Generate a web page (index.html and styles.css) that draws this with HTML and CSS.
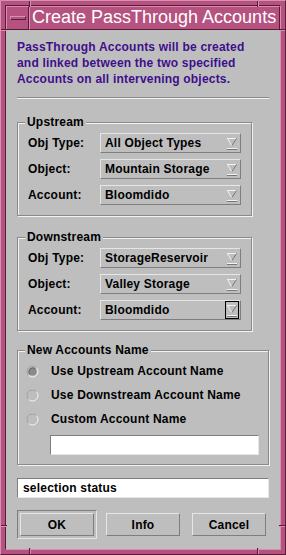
FILE: index.html
```html
<!DOCTYPE html>
<html>
<head>
<meta charset="utf-8">
<link rel="stylesheet" href="styles.css">
</head>
<body>
<div class="window">
  <span class="tick tv" style="left:28px;top:0"></span>
  <span class="tick tv" style="left:256px;top:0"></span>
  <span class="tick tv" style="left:28px;bottom:0"></span>
  <span class="tick tv" style="left:256px;bottom:0"></span>
  <span class="tick th" style="top:28px;left:0"></span>
  <span class="tick th" style="top:28px;right:0"></span>
  <span class="tick th" style="top:524px;left:0"></span>
  <span class="tick th" style="top:524px;right:0"></span>
  <div class="inner">
    <div class="titlebar">
      <div class="menu-btn"><span class="menu-bar"></span></div>
      <div class="title">Create PassThrough Accounts</div>
    </div>
    <div class="client">
      <p class="desc">PassThrough Accounts will be created<br>and linked between the two specified<br>Accounts on all intervening objects.</p>
      <div class="sep"></div>

      <fieldset class="group group-narrow group-up">
        <legend>Upstream</legend>
        <div class="row"><span class="lbl">Obj Type:</span><div class="combo"><span class="val">All Object Types</span><span class="arrow"><svg width="10" height="13" viewBox="0 0 10 13"><path d="M0.5 0.5 L4.5 7.5" stroke="#f2f2f2" fill="none"/><path d="M0 0.5 H9" stroke="#f2f2f2"/><path d="M9.5 0.5 L5 7.5" stroke="#777" fill="none"/><rect x="0" y="10" width="10" height="1" fill="#f2f2f2"/><rect x="0" y="11" width="10" height="1" fill="#777"/></svg></span></div></div>
        <div class="row"><span class="lbl">Object:</span><div class="combo"><span class="val">Mountain Storage</span><span class="arrow"><svg width="10" height="13" viewBox="0 0 10 13"><path d="M0.5 0.5 L4.5 7.5" stroke="#f2f2f2" fill="none"/><path d="M0 0.5 H9" stroke="#f2f2f2"/><path d="M9.5 0.5 L5 7.5" stroke="#777" fill="none"/><rect x="0" y="10" width="10" height="1" fill="#f2f2f2"/><rect x="0" y="11" width="10" height="1" fill="#777"/></svg></span></div></div>
        <div class="row"><span class="lbl">Account:</span><div class="combo"><span class="val">Bloomdido</span><span class="arrow"><svg width="10" height="13" viewBox="0 0 10 13"><path d="M0.5 0.5 L4.5 7.5" stroke="#f2f2f2" fill="none"/><path d="M0 0.5 H9" stroke="#f2f2f2"/><path d="M9.5 0.5 L5 7.5" stroke="#777" fill="none"/><rect x="0" y="10" width="10" height="1" fill="#f2f2f2"/><rect x="0" y="11" width="10" height="1" fill="#777"/></svg></span></div></div>
      </fieldset>

      <fieldset class="group group-narrow group-down">
        <legend>Downstream</legend>
        <div class="row"><span class="lbl">Obj Type:</span><div class="combo"><span class="val">StorageReservoir</span><span class="arrow"><svg width="10" height="13" viewBox="0 0 10 13"><path d="M0.5 0.5 L4.5 7.5" stroke="#f2f2f2" fill="none"/><path d="M0 0.5 H9" stroke="#f2f2f2"/><path d="M9.5 0.5 L5 7.5" stroke="#777" fill="none"/><rect x="0" y="10" width="10" height="1" fill="#f2f2f2"/><rect x="0" y="11" width="10" height="1" fill="#777"/></svg></span></div></div>
        <div class="row"><span class="lbl">Object:</span><div class="combo"><span class="val">Valley Storage</span><span class="arrow"><svg width="10" height="13" viewBox="0 0 10 13"><path d="M0.5 0.5 L4.5 7.5" stroke="#f2f2f2" fill="none"/><path d="M0 0.5 H9" stroke="#f2f2f2"/><path d="M9.5 0.5 L5 7.5" stroke="#777" fill="none"/><rect x="0" y="10" width="10" height="1" fill="#f2f2f2"/><rect x="0" y="11" width="10" height="1" fill="#777"/></svg></span></div></div>
        <div class="row"><span class="lbl">Account:</span><div class="combo"><span class="val">Bloomdido</span><span class="arrow focus"><svg width="10" height="13" viewBox="0 0 10 13"><path d="M0.5 0.5 L4.5 7.5" stroke="#f2f2f2" fill="none"/><path d="M0 0.5 H9" stroke="#f2f2f2"/><path d="M9.5 0.5 L5 7.5" stroke="#777" fill="none"/><rect x="0" y="10" width="10" height="1" fill="#f2f2f2"/><rect x="0" y="11" width="10" height="1" fill="#777"/></svg></span></div></div>
      </fieldset>

      <fieldset class="group group-wide">
        <legend>New Accounts Name</legend>
        <div class="radio-row"><span class="radio"><svg width="13" height="13" viewBox="0 0 13 13"><circle cx="6.5" cy="6.5" r="5.5" fill="none" stroke="#f4f4f4"/><path d="M2.6 10.4 A5.5 5.5 0 0 1 10.4 2.6" fill="none" stroke="#8a8a8a"/><circle cx="6.5" cy="6.5" r="4" fill="#8a8a8a"/><path d="M3.7 9.3 A4 4 0 0 1 9.3 3.7" fill="none" stroke="#666"/></svg></span><span class="rlbl">Use Upstream Account Name</span></div>
        <div class="radio-row"><span class="radio"><svg width="13" height="13" viewBox="0 0 13 13"><circle cx="6.5" cy="6.5" r="5.5" fill="none" stroke="#f4f4f4"/><path d="M2.6 10.4 A5.5 5.5 0 0 1 10.4 2.6" fill="none" stroke="#8a8a8a"/></svg></span><span class="rlbl">Use Downstream Account Name</span></div>
        <div class="radio-row"><span class="radio"><svg width="13" height="13" viewBox="0 0 13 13"><circle cx="6.5" cy="6.5" r="5.5" fill="none" stroke="#f4f4f4"/><path d="M2.6 10.4 A5.5 5.5 0 0 1 10.4 2.6" fill="none" stroke="#8a8a8a"/></svg></span><span class="rlbl">Custom Account Name</span></div>
        <div class="custom-input"></div>
      </fieldset>

      <div class="status">selection status</div>

      <div class="buttons">
        <div class="default-ring"><div class="btn">OK</div></div>
        <div class="btn btn-info">Info</div>
        <div class="btn btn-cancel">Cancel</div>
      </div>
    </div>
  </div>
</div>
</body>
</html>
```

FILE: styles.css
```css
html, body {
  margin: 0;
  padding: 0;
  background: #b5527f;
}
body {
  width: 286px;
  height: 555px;
  font-family: "Liberation Sans", Arial, sans-serif;
  font-weight: bold;
  font-size: 12px;
  letter-spacing: 0.2px;
  color: #000;
}
.window {
  position: relative;
  box-sizing: border-box;
  width: 286px;
  height: 555px;
  background: #b5527f;
  border: 1px solid;
  border-color: #d98fb2 #5a1a3a #5a1a3a #d98fb2;
  padding: 4px;
  display: flex;
  flex-direction: column;
}
.tick {
  position: absolute;
  box-sizing: border-box;
}
.tv {
  width: 2px;
  height: 6px;
  border-left: 1px solid #5a1a3a;
  border-right: 1px solid #d98fb2;
}
.th {
  width: 6px;
  height: 2px;
  border-top: 1px solid #5a1a3a;
  border-bottom: 1px solid #d98fb2;
}
.inner {
  flex: 1;
  display: flex;
  flex-direction: column;
  border: 1px solid;
  border-color: #5a1a3a #d98fb2 #d98fb2 #5a1a3a;
  min-height: 0;
}
.titlebar {
  display: flex;
  height: 24px;
  flex: none;
}
.menu-btn {
  width: 23px;
  box-sizing: border-box;
  border: 1px solid;
  border-color: #d98fb2 #5a1a3a #5a1a3a #d98fb2;
  display: flex;
  align-items: center;
  justify-content: center;
  background: #b5527f;
}
.menu-bar {
  width: 16px;
  height: 4px;
  box-sizing: border-box;
  border: 1px solid;
  border-color: #d98fb2 #5a1a3a #5a1a3a #d98fb2;
}
.title {
  flex: 1;
  box-sizing: border-box;
  border: 1px solid;
  border-color: #d98fb2 #5a1a3a #5a1a3a #d98fb2;
  background: #b5527f;
  color: #fff;
  font-weight: normal;
  font-size: 18px;
  letter-spacing: 0;
  line-height: 21px;
  padding-left: 2px;
  white-space: nowrap;
  overflow: hidden;
}
.client {
  flex: 1;
  background: #bebebe;
  padding: 9px 11px 0 11px;
  display: flex;
  flex-direction: column;
  align-items: flex-start;
}
.desc {
  margin: 0;
  color: #3f0f8c;
  line-height: 16px;
  font-size: 12px;
  white-space: nowrap;
}
.sep {
  align-self: stretch;
  margin-top: 10px;
  height: 0;
  border-top: 1px solid #8a8a8a;
  border-bottom: 1px solid #f2f2f2;
}
.group {
  margin: 0;
  box-sizing: border-box;
  border: 1px solid #8a8a8a;
  box-shadow: inset 1px 1px 0 #f2f2f2, 1px 1px 0 #f2f2f2;
  padding: 4px 9px 10px 10px;
  display: flex;
  flex-direction: column;
  min-width: 0;
}
.group legend {
  padding: 0 2px;
  margin-left: -3px;
  line-height: 14px;
  background: #bebebe;
}
.group-narrow {
  width: 235px;
  gap: 6px;
}
.group-up {
  margin-top: 16px;
}
.group-down {
  margin-top: 14px;
}
.row {
  display: flex;
  align-items: center;
  height: 20px;
}
.lbl {
  width: 72px;
  flex: none;
}
.combo {
  width: 141px;
  height: 20px;
  box-sizing: border-box;
  border: 1px solid;
  border-color: #e6e6e6 #7e7e7e #7e7e7e #e6e6e6;
  display: flex;
  align-items: center;
  padding-left: 4px;
  padding-right: 1px;
}
.val {
  flex: 1;
  white-space: nowrap;
}
.arrow {
  box-sizing: border-box;
  width: 14px;
  height: 18px;
  border: 1px solid transparent;
  display: flex;
  align-items: flex-start;
  justify-content: center;
  padding-top: 3px;
}
.arrow.focus {
  border-color: #000;
}
.group-wide {
  align-self: stretch;
  margin-top: 12px;
  padding-top: 2px;
  padding-bottom: 9px;
}
.radio-row {
  display: flex;
  align-items: center;
  height: 24px;
}
.radio {
  width: 13px;
  height: 13px;
  margin-left: -2px;
  margin-right: 12px;
  display: flex;
}
.custom-input {
  margin-top: 4px;
  margin-left: 22px;
  height: 20px;
  box-sizing: border-box;
  background: #fff;
  border: 1px solid;
  border-color: #7e7e7e #e6e6e6 #e6e6e6 #7e7e7e;
}
.status {
  align-self: stretch;
  margin-top: 13px;
  height: 20px;
  box-sizing: border-box;
  background: #fff;
  border: 1px solid;
  border-color: #7e7e7e #e6e6e6 #e6e6e6 #7e7e7e;
  padding-left: 5px;
  line-height: 18px;
}
.buttons {
  margin-top: 12px;
  display: flex;
  align-items: center;
}
.default-ring {
  border: 1px solid;
  border-color: #7e7e7e #e6e6e6 #e6e6e6 #7e7e7e;
  padding: 2px;
}
.btn {
  width: 74px;
  height: 23px;
  box-sizing: border-box;
  border: 1px solid;
  border-color: #e6e6e6 #7e7e7e #7e7e7e #e6e6e6;
  display: flex;
  align-items: center;
  justify-content: center;
}
.btn-info {
  margin-left: 9px;
}
.btn-cancel {
  margin-left: 12px;
}
```
